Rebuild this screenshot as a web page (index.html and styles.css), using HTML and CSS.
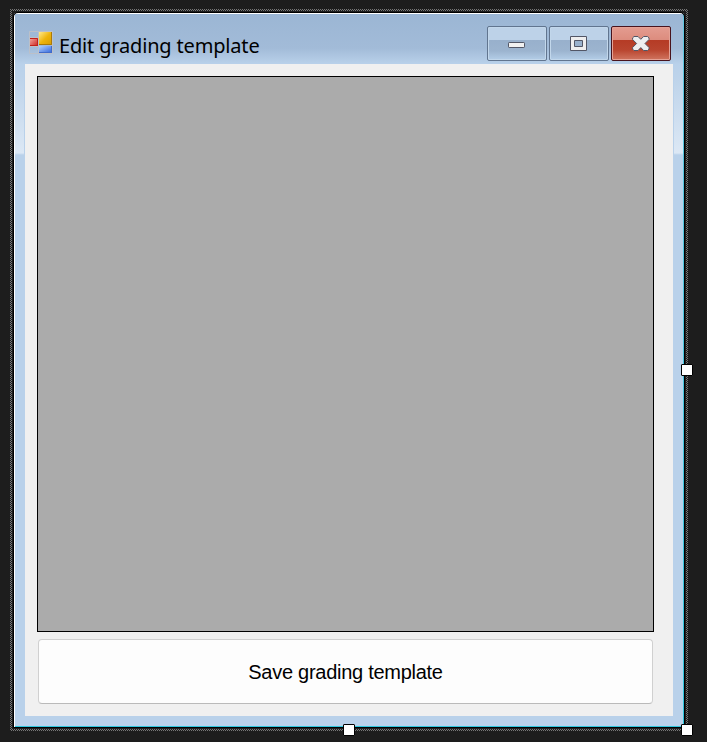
FILE: index.html
```html
<!DOCTYPE html>
<html lang="en">
<head>
<meta charset="utf-8">
<title>Edit grading template</title>
<link rel="stylesheet" href="styles.css">
</head>
<body>
<div class="selection">
  <main class="window">
    <header class="titlebar">
      <svg class="app-icon" width="24" height="24" viewBox="0 0 24 24">
        <defs>
          <linearGradient id="gold" x2="1" y2="1"><stop stop-color="#ffe98c"/><stop offset=".5" stop-color="#eeb40c"/><stop offset="1" stop-color="#d79b00"/></linearGradient>
          <linearGradient id="red" x2="1" y2="1"><stop stop-color="#f5a9a2"/><stop offset="1" stop-color="#c9211b"/></linearGradient>
          <linearGradient id="blue" x2="1" y2="1"><stop stop-color="#b0d0ff"/><stop offset="1" stop-color="#2f63d8"/></linearGradient>
        </defs>
        <path d="M.5.5h23v22H.5zM9.500.5v22M.5 6.500h9M.5 15.500h9" fill="none" stroke="#bcc0c8"/>
        <path d="M10 1h13v13H10z" fill="url(#gold)"/><path d="M22.500 1v12.500H10" fill="none" stroke="#a97a09"/>
        <path d="M1 7h8v8H1z" fill="url(#red)"/><path d="M1 7.500h7.500v7H1" fill="none" stroke="#c3201a"/>
        <path d="M10 15h13v7H10z" fill="url(#blue)"/><path d="M22.500 15v6.500H10" fill="none" stroke="#416bc9"/>
      </svg>
      <h1 class="title">Edit grading template</h1>
      <div class="controls">
        <button class="control" aria-label="Minimize">
          <svg width="18" height="18" viewBox="0 0 18 18"><rect x=".5" y="7.500" width="16" height="5" rx=".7" fill="#f1f1f1" stroke="#525666"/></svg>
        </button>
        <button class="control" aria-label="Maximize">
          <svg width="18" height="18" viewBox="0 0 18 18"><path d="M.5 1.500h16v14H.5zM4.500 5.500v6h8v-6z" fill="#eeeeef" fill-rule="evenodd" stroke="#525666" stroke-linejoin="round"/></svg>
        </button>
        <button class="control close" aria-label="Close">
          <svg width="18" height="18" viewBox="0 0 18 18"><path d="M2 1.500h4l2.800 2.800 2.800-2.800h4l1.400 1.400v1.600L13 8.500l4 4v1.600l-1.400 1.400h-4l-2.800-2.900L6 15.500H2L.6 14.100v-1.600l4-4-4-4V2.900z" fill="#eeeeef" stroke="#525666" stroke-linejoin="round"/></svg>
        </button>
      </div>
    </header>
    <section class="client">
      <div class="grid"></div>
      <button class="save">Save grading template</button>
    </section>
  </main>
  <i class="handle east"></i>
  <i class="handle south"></i>
  <i class="handle corner"></i>
</div>
</body>
</html>
```
FILE: styles.css
```css
* { box-sizing: border-box; }

body {
  margin: 0;
  height: 742px;
  padding: 9px 0 0 10px;
  overflow: hidden;
  background: #1d1d1d;
}

.selection {
  position: relative;
  width: 678px;
  height: 722px;
  padding: 3px;
  background:
    linear-gradient(#1d1d1d, #1d1d1d) 2px 2px / 674px 718px no-repeat,
    repeating-conic-gradient(#1d1d1d 0 25%, #777 0 50%) 0 0 / 2px 2px;
}

.window {
  display: flex;
  flex-direction: column;
  width: 672px;
  height: 716px;
  padding: 0 10px 11px;
  border: 1px solid #000;
  border-radius: 5px 5px 0 0;
  background:
    linear-gradient(#fff, #fff) 0 0 / 100% 1px no-repeat,
    linear-gradient(#fff, #fff) 0 0 / 1px 100% no-repeat,
    linear-gradient(#2cc5dc, #2cc5dc) 0 100% / 100% 1px no-repeat,
    linear-gradient(#5fc6df, #2cc5dc) 100% 0 / 1px 100% no-repeat,
    linear-gradient(#b9d1ea, #b9d1ea) 10px 51px / 1px 91px no-repeat,
    linear-gradient(#b9d1ea, #b9d1ea) 659px 51px / 1px 91px no-repeat,
    linear-gradient(#9bb6d4 0, #a2bbd8 35px, #b9d1ea 51px, #bdd3ea 65px, #dce8f5 140px, #c8dbef 141px, #b9d1ea 142px);
}

.titlebar {
  display: flex;
  flex: 0 0 51px;
  padding: 13px 3px 0 5px;
}

.app-icon { margin-top: 5px; flex: none; }

.title {
  flex: 1;
  margin: 5px 0 0 6px;
  font: 400 20px/30px "Noto Sans", "Open Sans", sans-serif;
  letter-spacing: -.17px;
  white-space: nowrap;
  color: #000;
}

.controls { display: flex; gap: 2px; }

.control {
  display: grid;
  place-items: center;
  width: 60px;
  height: 35px;
  padding: 0;
  border: 1px solid #61758f;
  border-radius: 2px;
  background: linear-gradient(#bdd2e8 0 13px, #98b0cc 13px, #9cb4cf 24px, #b4cee8);
  box-shadow: inset 0 0 0 1px #c2d7eb;
}

.close {
  border-color: #48131d;
  background: linear-gradient(#e49c90, #dc8c7e 13px, #b53b25 13px, #b9452f 23px, #d07560);
  box-shadow: inset 0 0 0 1px #e5a296;
}

.client {
  display: flex;
  flex: 1;
  flex-direction: column;
  gap: 7px;
  padding: 12px 20px 12px 12px;
  width: 648px;
  margin-left: 1px;
  background: #f0f0f0;
}

.grid {
  flex: none;
  width: 617px;
  height: 556px;
  border: 1px solid #000;
  background: #ababab;
}

.save {
  flex: none;
  width: 615px;
  height: 65px;
  margin-left: 1px;
  padding: 1px 0 0;
  border: 1px solid #d0d0d0;
  border-bottom-color: #bababa;
  border-radius: 4px;
  background: #fdfdfd;
  color: #000;
  font: 20px "Liberation Sans", Arial, sans-serif;
  letter-spacing: -.27px;
}

.handle {
  position: absolute;
  width: 12px;
  height: 12px;
  border: 1px solid #000;
  border-radius: 1px;
  background: #fff;
}

.east { left: 671px; top: 355px; }
.south { left: 333px; top: 715px; }
.corner { left: 671px; top: 715px; }
```
